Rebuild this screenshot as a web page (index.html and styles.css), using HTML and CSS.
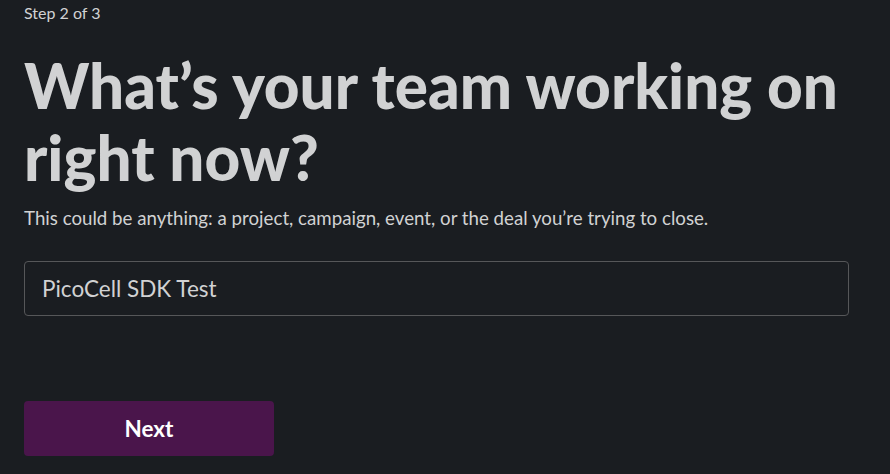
FILE: index.html
```html
<!DOCTYPE html>
<html>
<head>
<meta charset="utf-8">
<link rel="stylesheet" href="styles.css">
</head>
<body>
<main class="page">
  <div class="step">Step 2 of 3</div>
  <h1 class="title">What’s your team working on right now?</h1>
  <p class="subtitle">This could be anything: a project, campaign, event, or the deal you’re trying to close.</p>
  <div class="field">PicoCell SDK Test</div>
  <button class="next">Next</button>
</main>
</body>
</html>
```
FILE: styles.css
```css
html, body {
  margin: 0;
  padding: 0;
  background: #1a1d21;
  height: 100%;
}
body {
  font-family: Lato, "Noto Sans", sans-serif;
  color: #d1d2d3;
}
.page {
  width: 825px;
  padding: 3px 0 0 24px;
  display: flex;
  flex-direction: column;
  align-items: flex-start;
}
.step {
  font-size: 16px;
  line-height: 20px;
}
.title {
  margin: 26px 0 0;
  font-family: Lato, sans-serif;
  font-weight: 900;
  font-size: 62px;
  line-height: 72px;
  letter-spacing: 0;
  color: #d1d2d3;
  width: 830px;
}
.subtitle {
  margin: 13px 0 0;
  font-size: 18.7px;
  line-height: 24px;
}
.field {
  margin-top: 31px;
  box-sizing: border-box;
  width: 825px;
  height: 55px;
  border: 1px solid #565759;
  border-radius: 4px;
  padding: 0 17px;
  display: flex;
  align-items: center;
  font-size: 22.5px;
  color: #d1d2d3;
}
.next {
  margin-top: 85px;
  width: 250px;
  height: 55px;
  border: none;
  border-radius: 4px;
  background: #4a154b;
  color: #ffffff;
  font-family: Lato, sans-serif;
  font-weight: 700;
  font-size: 22.5px;
}
```
